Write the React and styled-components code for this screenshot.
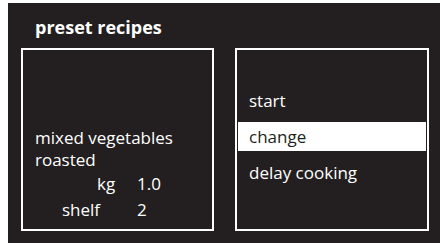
import styled, { createGlobalStyle } from "styled-components";

const GlobalStyle = createGlobalStyle`
  html, body {
    margin: 0;
    padding: 0;
    background: #fff;
  }
  body {
    font-family: "Open Sans", "Noto Sans", sans-serif;
  }
`;

const Screen = styled.div`
  margin: 3px 0 0 8px;
  height: 240px;
  background-color: #231f20;
  color: #fff;
  padding: 0 11px 0 13px;
  box-sizing: border-box;
`;

const Title = styled.h1`
  margin: 0;
  padding: 13px 0 0 14px;
  height: 45px;
  box-sizing: border-box;
  font-size: 18px;
  font-weight: 700;
  line-height: 22px;
`;

const Panels = styled.div`
  display: flex;
  gap: 21px;
`;

const Box = styled.div`
  width: ${(props) => props.width}px;
  height: 183px;
  box-sizing: border-box;
  border: 2px solid #fff;
  display: flex;
  flex-direction: column;
`;

const Info = styled(Box)`
  justify-content: flex-end;
  padding: 0 0 6px 12px;
`;

const Line = styled.div`
  font-size: 17px;
  line-height: 22px;
`;

const Field = styled.div`
  display: grid;
  grid-template-columns: 102px auto;
  font-size: 17px;
  line-height: 26px;
`;

const Label = styled.span`
  padding-left: ${(props) => props.indent}px;
`;

const Menu = styled(Box)`
  padding: 36px 1px 0;
  gap: 7px;
`;

const Item = styled.div`
  height: 29px;
  padding-left: 11px;
  display: flex;
  align-items: center;
  font-size: 17px;
  background: ${(props) => (props.active ? "#fff" : "transparent")};
  color: ${(props) => (props.active ? "#231f20" : "#fff")};
`;

const App = () => {
  return (
    <>
      <GlobalStyle />
      <Screen>
        <Title>preset recipes</Title>
        <Panels>
          <Info width={193}>
            <Line>mixed vegetables</Line>
            <Line>roasted</Line>
            <Field>
              <Label indent={62}>kg</Label>
              <span>1.0</span>
            </Field>
            <Field>
              <Label indent={27}>shelf</Label>
              <span>2</span>
            </Field>
          </Info>
          <Menu width={194}>
            <Item>start</Item>
            <Item active>change</Item>
            <Item>delay cooking</Item>
          </Menu>
        </Panels>
      </Screen>
    </>
  );
};

export default App;
